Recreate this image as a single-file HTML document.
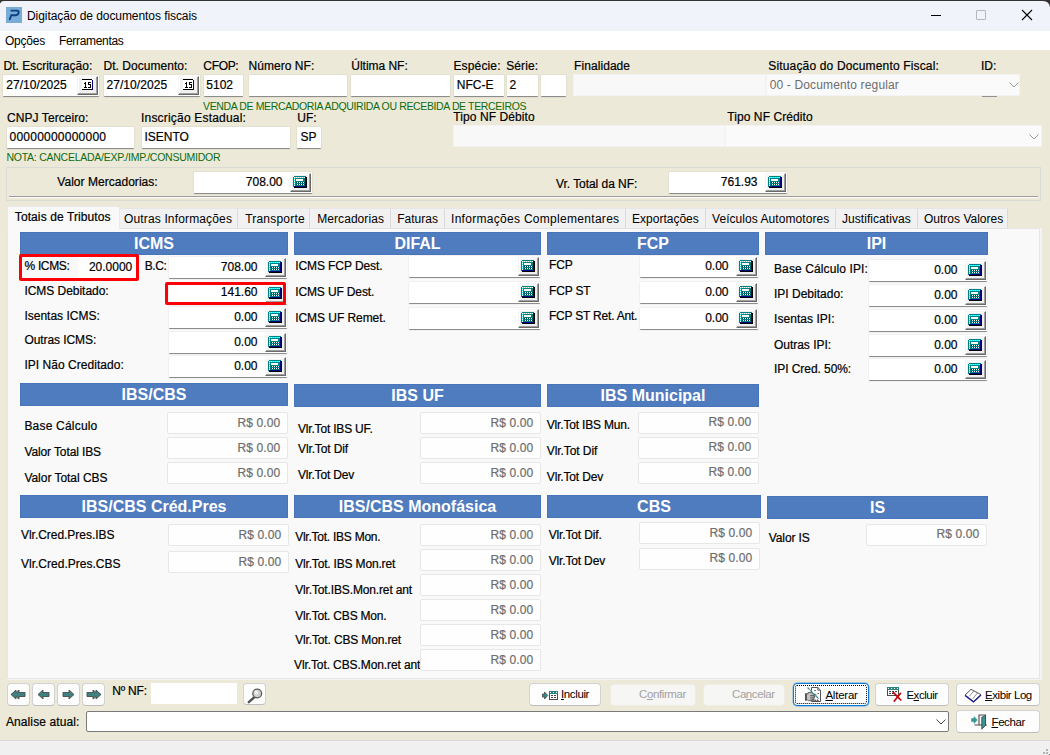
<!DOCTYPE html><html><head><meta charset="utf-8"><title>Digitação de documentos fiscais</title><style>
*{box-sizing:border-box;margin:0;padding:0}
html,body{width:1050px;height:755px;overflow:hidden;background:#ece9d8}
body{font-family:"Liberation Sans",sans-serif;font-size:12px;color:#000;position:relative}
.a{position:absolute;white-space:nowrap}
.l{position:absolute;white-space:nowrap;font-size:12px;line-height:14px;height:14px;-webkit-text-stroke:0.2px currentColor}
.g{position:absolute;white-space:nowrap;font-size:11px;line-height:13px;color:#0f6b0f}
.i{position:absolute;background:#fff;border-bottom:1px solid #8c8c8c;border-radius:1px;box-shadow:0 0 0 1px rgba(0,0,0,0.035)}
.d{position:absolute;background:#fefefe;border:1px solid #e7e7e7;border-radius:2px}
.dis{position:absolute;background:#f8f8f8;border:1px solid #f3f3f3}
.h{position:absolute;background:#4f7bbf;box-shadow:inset 0 0 0 1px #4875ba;color:#fff;font-weight:bold;font-size:16px;text-align:center;white-space:nowrap}
.b3{position:absolute;background:#f0f0f0;border:1px solid;border-color:#f4f4f4 #696969 #696969 #f4f4f4;box-shadow:inset -1px -1px 0 #a0a0a0,inset 1px 1px 0 #fff}
.tab{position:absolute;top:208px;height:21px;background:#f1f1f1;border-right:1px solid #dadada;border-top:1px solid #e6e6e6;border-bottom:1px solid #e2e2e2}
.btn{position:absolute;background:#fdfdfd;border:1px solid #d2d2d2;border-bottom-color:#bdbdbd;border-radius:4px}
u{text-decoration:underline}
svg{position:absolute;overflow:visible}
</style></head><body>
<div class="a" style="left:0;top:0;width:1050px;height:31px;background:#f0f3f9"></div>
<div class="a" style="left:0;top:0;width:1050px;height:1px;background:#333"></div>
<svg style="left:0;top:0" width="6" height="6"><path d="M0 0H6V1H4Q1 1 0 3.4Z" fill="#333"/></svg>
<svg style="left:1041px;top:0" width="9" height="9"><path d="M9 0H0V1H2Q8 1 9 7.2Z" fill="#333"/></svg>
<svg style="left:6px;top:7px" width="16" height="16" viewBox="0 0 16 16"><rect width="16" height="16" fill="#79abd7"/><path d="M5.3 3.6H10.8Q13 3.6 12.6 5.6Q12.2 8 9.8 8.2H5.2L3.8 12.2" stroke="#0a3f82" stroke-width="1.9" fill="none" stroke-linecap="round" stroke-linejoin="round"/></svg>
<div class="l" style="left:27px;top:9px;letter-spacing:-0.067px;-webkit-text-stroke:0;">Digitação de documentos fiscais</div>
<div class="a" style="left:931px;top:15px;width:10px;height:1px;background:#000"></div>
<div class="a" style="left:976px;top:10px;width:10px;height:10px;border:1px solid #b4b8bd;border-radius:1px"></div>
<svg style="left:1022px;top:10px" width="10" height="10" viewBox="0 0 10 10"><path d="M0 0L10 10M10 0L0 10" stroke="#000" stroke-width="1.1" fill="none"/></svg>
<div class="a" style="left:0;top:31px;width:1050px;height:19px;background:#fff"></div>
<div class="l" style="left:5px;top:34px;letter-spacing:-0.224px;-webkit-text-stroke:0;">Opções</div>
<div class="l" style="left:59px;top:34px;letter-spacing:-0.320px;-webkit-text-stroke:0;">Ferramentas</div>
<div class="l" style="left:3.5px;top:59px;letter-spacing:0.002px;">Dt. Escrituração:</div>
<div class="l" style="left:103.5px;top:59px;letter-spacing:0.040px;">Dt. Documento:</div>
<div class="l" style="left:203.3px;top:59px;letter-spacing:-0.331px;">CFOP:</div>
<div class="l" style="left:248.6px;top:59px;letter-spacing:0.036px;">Número NF:</div>
<div class="l" style="left:351.3px;top:59px;letter-spacing:-0.027px;">Última NF:</div>
<div class="l" style="left:453.4px;top:59px;letter-spacing:0.161px;">Espécie:</div>
<div class="l" style="left:506.2px;top:59px;letter-spacing:0.109px;">Série:</div>
<div class="l" style="left:574.1px;top:59px;letter-spacing:0.062px;">Finalidade</div>
<div class="l" style="left:768.3px;top:59px;letter-spacing:0.160px;">Situação do Documento Fiscal:</div>
<div class="l" style="left:981px;top:59px;">ID:</div>
<div class="i" style="left:3px;top:75px;width:96px;height:22px;"></div>
<div class="b3" style="left:77px;top:76px;width:21px;height:19px"><svg width="11" height="11" viewBox="0 0 11 11" style="left:4px;top:2px" shape-rendering="crispEdges"><rect x="0" y="0" width="11" height="11" fill="#fff"/><rect x="0" y="0" width="10" height="1" fill="#000"/><rect x="0" y="10" width="11" height="1" fill="#000"/><rect x="10" y="1" width="1" height="10" fill="#000080"/><g fill="#000"><rect x="2" y="4" width="1" height="1"/><rect x="3" y="3" width="1" height="6"/><rect x="2" y="8" width="3" height="1"/><rect x="6" y="3" width="3" height="1"/><rect x="6" y="4" width="1" height="2"/><rect x="6" y="5" width="3" height="1"/><rect x="8" y="6" width="1" height="2"/><rect x="6" y="8" width="3" height="1"/></g></svg></div>
<div class="l" style="left:6.2px;top:78px;letter-spacing:0.057px;">27/10/2025</div>
<div class="i" style="left:104px;top:75px;width:96px;height:22px;"></div>
<div class="b3" style="left:178px;top:76px;width:21px;height:19px"><svg width="11" height="11" viewBox="0 0 11 11" style="left:4px;top:2px" shape-rendering="crispEdges"><rect x="0" y="0" width="11" height="11" fill="#fff"/><rect x="0" y="0" width="10" height="1" fill="#000"/><rect x="0" y="10" width="11" height="1" fill="#000"/><rect x="10" y="1" width="1" height="10" fill="#000080"/><g fill="#000"><rect x="2" y="4" width="1" height="1"/><rect x="3" y="3" width="1" height="6"/><rect x="2" y="8" width="3" height="1"/><rect x="6" y="3" width="3" height="1"/><rect x="6" y="4" width="1" height="2"/><rect x="6" y="5" width="3" height="1"/><rect x="8" y="6" width="1" height="2"/><rect x="6" y="8" width="3" height="1"/></g></svg></div>
<div class="l" style="left:106.5px;top:78px;letter-spacing:0.057px;">27/10/2025</div>
<div class="i" style="left:204px;top:75px;width:39px;height:22px;"></div>
<div class="l" style="left:206.3px;top:78px;">5102</div>
<div class="i" style="left:249px;top:75px;width:98px;height:22px;"></div>
<div class="i" style="left:351px;top:75px;width:99px;height:22px;"></div>
<div class="i" style="left:454px;top:75px;width:50px;height:22px;"></div>
<div class="l" style="left:456.8px;top:78px;letter-spacing:-0.014px;">NFC-E</div>
<div class="i" style="left:507px;top:75px;width:31px;height:22px;"></div>
<div class="l" style="left:509.5px;top:78px;">2</div>
<div class="i" style="left:541px;top:75px;width:25px;height:22px;"></div>
<div class="dis" style="left:573px;top:74px;width:193px;height:22px;background:#f8f8f8"></div>
<div class="dis" style="left:766px;top:74px;width:254px;height:22px;background:#fafafa"><svg style="left:242px;top:7px" width="10" height="6" viewBox="0 0 10 6"><path d="M0.5 0.5L5 5L9.5 0.5" stroke="#9a9a9a" fill="none"/></svg></div>
<div class="l" style="left:769.7px;top:78px;letter-spacing:0.148px;color:#6d6d6d;-webkit-text-stroke:0;">00 - Documento regular</div>
<div class="a" style="left:982px;top:96px;width:15px;height:1px;background:#8f8f8f"></div>
<div class="g" style="left:203px;top:99.8px;letter-spacing:-0.367px;font-size:10.5px;line-height:12.5px;height:12.5px;">VENDA DE MERCADORIA ADQUIRIDA OU RECEBIDA DE TERCEIROS</div>
<div class="l" style="left:7.1px;top:111px;letter-spacing:0.059px;">CNPJ Terceiro:</div>
<div class="l" style="left:141px;top:111px;letter-spacing:0.192px;">Inscrição Estadual:</div>
<div class="l" style="left:297.3px;top:111px;">UF:</div>
<div class="l" style="left:453.2px;top:110px;letter-spacing:0.096px;">Tipo NF Débito</div>
<div class="l" style="left:727.2px;top:110px;letter-spacing:0.090px;">Tipo NF Crédito</div>
<div class="i" style="left:7px;top:127px;width:127px;height:22px;"></div>
<div class="l" style="left:9.5px;top:130px;letter-spacing:0.235px;">00000000000000</div>
<div class="i" style="left:142px;top:127px;width:148px;height:22px;"></div>
<div class="l" style="left:144.5px;top:130px;">ISENTO</div>
<div class="i" style="left:297px;top:127px;width:24px;height:22px;"></div>
<div class="l" style="left:300.5px;top:130px;">SP</div>
<div class="dis" style="left:453px;top:125px;width:272px;height:22px"></div>
<div class="dis" style="left:725px;top:125px;width:317px;height:22px;background:#fafafa"><svg style="left:303px;top:8px" width="10" height="6" viewBox="0 0 10 6"><path d="M0.5 0.5L5 5L9.5 0.5" stroke="#9a9a9a" fill="none"/></svg></div>
<div class="g" style="left:6.5px;top:151.2px;letter-spacing:-0.254px;font-size:10.5px;line-height:12.5px;height:12.5px;">NOTA: CANCELADA/EXP./IMP./CONSUMIDOR</div>
<div class="a" style="left:6px;top:167px;width:1035px;height:34px;border:1px solid #dbdbd6"></div>
<div class="a" style="left:9px;top:196px;width:1029px;height:1px;background:#9c9c9c"></div>
<div class="a" style="left:9px;top:197px;width:1029px;height:1px;background:#fff"></div>
<div class="l" style="left:57.3px;top:175px;letter-spacing:0.033px;">Valor Mercadorias:</div>
<div class="i" style="left:194px;top:172px;width:118px;height:22px;"></div>
<div class="b3" style="left:290px;top:173px;width:21px;height:19px"><svg width="14" height="12" viewBox="0 0 14 12" style="left:2px;top:2px" shape-rendering="crispEdges"><rect x="0" y="0" width="14" height="12" fill="#008080"/><rect x="12" y="1" width="1" height="10" fill="#000080"/><rect x="1" y="10" width="12" height="1" fill="#000080"/><rect x="13" y="1" width="1" height="11" fill="#000"/><rect x="1" y="11" width="13" height="1" fill="#000"/><rect x="1" y="1" width="1" height="1" fill="#fff"/><rect x="3" y="1" width="1" height="1" fill="#fff"/><rect x="5" y="1" width="1" height="1" fill="#fff"/><rect x="7" y="1" width="1" height="1" fill="#fff"/><rect x="9" y="1" width="1" height="1" fill="#fff"/><rect x="11" y="1" width="1" height="1" fill="#fff"/><rect x="2" y="1" width="1" height="1" fill="#0ff"/><rect x="4" y="1" width="1" height="1" fill="#0ff"/><rect x="6" y="1" width="1" height="1" fill="#0ff"/><rect x="8" y="1" width="1" height="1" fill="#0ff"/><rect x="10" y="1" width="1" height="1" fill="#0ff"/><rect x="1" y="3" width="1" height="1" fill="#fff"/><rect x="1" y="5" width="1" height="1" fill="#fff"/><rect x="1" y="7" width="1" height="1" fill="#fff"/><rect x="1" y="9" width="1" height="1" fill="#fff"/><rect x="1" y="2" width="1" height="1" fill="#0ff"/><rect x="1" y="4" width="1" height="1" fill="#0ff"/><rect x="1" y="6" width="1" height="1" fill="#0ff"/><rect x="1" y="8" width="1" height="1" fill="#0ff"/><rect x="3" y="3" width="7" height="2" fill="#fff"/><rect x="3" y="6" width="9" height="1" fill="#003c4c"/><rect x="4" y="6" width="1" height="1" fill="#fff"/><rect x="6" y="6" width="1" height="1" fill="#fff"/><rect x="8" y="6" width="1" height="1" fill="#fff"/><rect x="10" y="6" width="1" height="1" fill="#fff"/><rect x="3" y="8" width="9" height="1" fill="#003c4c"/><rect x="4" y="8" width="1" height="1" fill="#fff"/><rect x="6" y="8" width="1" height="1" fill="#fff"/><rect x="8" y="8" width="1" height="1" fill="#fff"/><rect x="10" y="8" width="1" height="1" fill="#fff"/><rect x="0" y="0" width="1" height="1" fill="#f0f0f0"/><rect x="13" y="0" width="1" height="1" fill="#f0f0f0"/><rect x="0" y="11" width="1" height="1" fill="#f0f0f0"/></svg></div>
<div class="l" style="left:245.8px;top:175px;letter-spacing:0.000px;">708.00</div>
<div class="l" style="left:556px;top:177px;letter-spacing:-0.051px;">Vr. Total da NF:</div>
<div class="i" style="left:669px;top:172px;width:118px;height:22px;"></div>
<div class="b3" style="left:765px;top:173px;width:21px;height:19px"><svg width="14" height="12" viewBox="0 0 14 12" style="left:2px;top:2px" shape-rendering="crispEdges"><rect x="0" y="0" width="14" height="12" fill="#008080"/><rect x="12" y="1" width="1" height="10" fill="#000080"/><rect x="1" y="10" width="12" height="1" fill="#000080"/><rect x="13" y="1" width="1" height="11" fill="#000"/><rect x="1" y="11" width="13" height="1" fill="#000"/><rect x="1" y="1" width="1" height="1" fill="#fff"/><rect x="3" y="1" width="1" height="1" fill="#fff"/><rect x="5" y="1" width="1" height="1" fill="#fff"/><rect x="7" y="1" width="1" height="1" fill="#fff"/><rect x="9" y="1" width="1" height="1" fill="#fff"/><rect x="11" y="1" width="1" height="1" fill="#fff"/><rect x="2" y="1" width="1" height="1" fill="#0ff"/><rect x="4" y="1" width="1" height="1" fill="#0ff"/><rect x="6" y="1" width="1" height="1" fill="#0ff"/><rect x="8" y="1" width="1" height="1" fill="#0ff"/><rect x="10" y="1" width="1" height="1" fill="#0ff"/><rect x="1" y="3" width="1" height="1" fill="#fff"/><rect x="1" y="5" width="1" height="1" fill="#fff"/><rect x="1" y="7" width="1" height="1" fill="#fff"/><rect x="1" y="9" width="1" height="1" fill="#fff"/><rect x="1" y="2" width="1" height="1" fill="#0ff"/><rect x="1" y="4" width="1" height="1" fill="#0ff"/><rect x="1" y="6" width="1" height="1" fill="#0ff"/><rect x="1" y="8" width="1" height="1" fill="#0ff"/><rect x="3" y="3" width="7" height="2" fill="#fff"/><rect x="3" y="6" width="9" height="1" fill="#003c4c"/><rect x="4" y="6" width="1" height="1" fill="#fff"/><rect x="6" y="6" width="1" height="1" fill="#fff"/><rect x="8" y="6" width="1" height="1" fill="#fff"/><rect x="10" y="6" width="1" height="1" fill="#fff"/><rect x="3" y="8" width="9" height="1" fill="#003c4c"/><rect x="4" y="8" width="1" height="1" fill="#fff"/><rect x="6" y="8" width="1" height="1" fill="#fff"/><rect x="8" y="8" width="1" height="1" fill="#fff"/><rect x="10" y="8" width="1" height="1" fill="#fff"/><rect x="0" y="0" width="1" height="1" fill="#f0f0f0"/><rect x="13" y="0" width="1" height="1" fill="#f0f0f0"/><rect x="0" y="11" width="1" height="1" fill="#f0f0f0"/></svg></div>
<div class="l" style="left:720.8px;top:175px;letter-spacing:0.000px;">761.93</div>
<div class="a" style="left:7px;top:228px;width:1035px;height:452px;background:#f3f3f3"></div>
<div class="a" style="left:7px;top:228px;width:1033px;height:451px;background:#f9f9f9;border:1px solid #e6e6e6"></div>
<div class="tab" style="left:119px;width:119px"></div>
<div class="l" style="left:124px;top:212px;letter-spacing:0.148px;-webkit-text-stroke:0;">Outras Informações</div>
<div class="tab" style="left:238px;width:72px"></div>
<div class="l" style="left:245.2px;top:212px;letter-spacing:0.202px;-webkit-text-stroke:0;">Transporte</div>
<div class="tab" style="left:310px;width:81px"></div>
<div class="l" style="left:317.2px;top:212px;letter-spacing:0.070px;-webkit-text-stroke:0;">Mercadorias</div>
<div class="tab" style="left:391px;width:54px"></div>
<div class="l" style="left:397.2px;top:212px;letter-spacing:0.018px;-webkit-text-stroke:0;">Faturas</div>
<div class="tab" style="left:445px;width:181px"></div>
<div class="l" style="left:451px;top:212px;letter-spacing:0.295px;-webkit-text-stroke:0;">Informações Complementares</div>
<div class="tab" style="left:626px;width:80px"></div>
<div class="l" style="left:632px;top:212px;letter-spacing:0.010px;-webkit-text-stroke:0;">Exportações</div>
<div class="tab" style="left:706px;width:130px"></div>
<div class="l" style="left:712px;top:212px;letter-spacing:0.058px;-webkit-text-stroke:0;">Veículos Automotores</div>
<div class="tab" style="left:836px;width:82px"></div>
<div class="l" style="left:842px;top:212px;letter-spacing:0.056px;-webkit-text-stroke:0;">Justificativas</div>
<div class="tab" style="left:918px;width:90px"></div>
<div class="l" style="left:924px;top:212px;letter-spacing:0.005px;-webkit-text-stroke:0;">Outros Valores</div>
<div class="a" style="left:7px;top:206px;width:113px;height:23px;background:#f9f9f9;border:1px solid #e9e9e9;border-bottom:0"></div>
<div class="l" style="left:14.8px;top:210px;letter-spacing:0.098px;">Totais de Tributos</div>
<div class="h" style="left:20px;top:232px;width:268px;height:23px;line-height:23px">ICMS</div>
<div class="h" style="left:294px;top:232px;width:247px;height:23px;line-height:23px">DIFAL</div>
<div class="h" style="left:547px;top:232px;width:212px;height:23px;line-height:23px">FCP</div>
<div class="h" style="left:765px;top:232px;width:223px;height:23px;line-height:23px">IPI</div>
<div class="h" style="left:20px;top:383px;width:268px;height:23px;line-height:23px">IBS/CBS</div>
<div class="h" style="left:294px;top:384px;width:247px;height:23px;line-height:23px">IBS UF</div>
<div class="h" style="left:547px;top:384px;width:212px;height:23px;line-height:23px">IBS Municipal</div>
<div class="h" style="left:20px;top:495px;width:268px;height:23px;line-height:23px">IBS/CBS Créd.Pres</div>
<div class="h" style="left:294px;top:495px;width:247px;height:23px;line-height:23px">IBS/CBS Monofásica</div>
<div class="h" style="left:547px;top:495px;width:214px;height:23px;line-height:23px">CBS</div>
<div class="h" style="left:767px;top:496px;width:221px;height:23px;line-height:23px">IS</div>
<div class="l" style="left:24.6px;top:259px;letter-spacing:-0.361px;">% ICMS:</div>
<div class="a" style="left:78px;top:257px;width:58px;height:21px;background:#fff"></div>
<div class="l" style="left:88.9px;top:260px;letter-spacing:0.000px;">20.0000</div>
<div class="l" style="left:144.8px;top:259px;letter-spacing:-0.457px;">B.C:</div>
<div class="i" style="left:169px;top:257px;width:118px;height:22px;"></div>
<div class="b3" style="left:265px;top:258px;width:21px;height:19px"><svg width="14" height="12" viewBox="0 0 14 12" style="left:2px;top:2px" shape-rendering="crispEdges"><rect x="0" y="0" width="14" height="12" fill="#008080"/><rect x="12" y="1" width="1" height="10" fill="#000080"/><rect x="1" y="10" width="12" height="1" fill="#000080"/><rect x="13" y="1" width="1" height="11" fill="#000"/><rect x="1" y="11" width="13" height="1" fill="#000"/><rect x="1" y="1" width="1" height="1" fill="#fff"/><rect x="3" y="1" width="1" height="1" fill="#fff"/><rect x="5" y="1" width="1" height="1" fill="#fff"/><rect x="7" y="1" width="1" height="1" fill="#fff"/><rect x="9" y="1" width="1" height="1" fill="#fff"/><rect x="11" y="1" width="1" height="1" fill="#fff"/><rect x="2" y="1" width="1" height="1" fill="#0ff"/><rect x="4" y="1" width="1" height="1" fill="#0ff"/><rect x="6" y="1" width="1" height="1" fill="#0ff"/><rect x="8" y="1" width="1" height="1" fill="#0ff"/><rect x="10" y="1" width="1" height="1" fill="#0ff"/><rect x="1" y="3" width="1" height="1" fill="#fff"/><rect x="1" y="5" width="1" height="1" fill="#fff"/><rect x="1" y="7" width="1" height="1" fill="#fff"/><rect x="1" y="9" width="1" height="1" fill="#fff"/><rect x="1" y="2" width="1" height="1" fill="#0ff"/><rect x="1" y="4" width="1" height="1" fill="#0ff"/><rect x="1" y="6" width="1" height="1" fill="#0ff"/><rect x="1" y="8" width="1" height="1" fill="#0ff"/><rect x="3" y="3" width="7" height="2" fill="#fff"/><rect x="3" y="6" width="9" height="1" fill="#003c4c"/><rect x="4" y="6" width="1" height="1" fill="#fff"/><rect x="6" y="6" width="1" height="1" fill="#fff"/><rect x="8" y="6" width="1" height="1" fill="#fff"/><rect x="10" y="6" width="1" height="1" fill="#fff"/><rect x="3" y="8" width="9" height="1" fill="#003c4c"/><rect x="4" y="8" width="1" height="1" fill="#fff"/><rect x="6" y="8" width="1" height="1" fill="#fff"/><rect x="8" y="8" width="1" height="1" fill="#fff"/><rect x="10" y="8" width="1" height="1" fill="#fff"/><rect x="0" y="0" width="1" height="1" fill="#f0f0f0"/><rect x="13" y="0" width="1" height="1" fill="#f0f0f0"/><rect x="0" y="11" width="1" height="1" fill="#f0f0f0"/></svg></div>
<div class="l" style="left:220.8px;top:260px;letter-spacing:0.000px;">708.00</div>
<div class="l" style="left:24.4px;top:284px;letter-spacing:-0.035px;">ICMS Debitado:</div>
<div class="i" style="left:169px;top:283px;width:118px;height:22px;"></div>
<div class="b3" style="left:265px;top:284px;width:21px;height:19px"><svg width="14" height="12" viewBox="0 0 14 12" style="left:2px;top:2px" shape-rendering="crispEdges"><rect x="0" y="0" width="14" height="12" fill="#008080"/><rect x="12" y="1" width="1" height="10" fill="#000080"/><rect x="1" y="10" width="12" height="1" fill="#000080"/><rect x="13" y="1" width="1" height="11" fill="#000"/><rect x="1" y="11" width="13" height="1" fill="#000"/><rect x="1" y="1" width="1" height="1" fill="#fff"/><rect x="3" y="1" width="1" height="1" fill="#fff"/><rect x="5" y="1" width="1" height="1" fill="#fff"/><rect x="7" y="1" width="1" height="1" fill="#fff"/><rect x="9" y="1" width="1" height="1" fill="#fff"/><rect x="11" y="1" width="1" height="1" fill="#fff"/><rect x="2" y="1" width="1" height="1" fill="#0ff"/><rect x="4" y="1" width="1" height="1" fill="#0ff"/><rect x="6" y="1" width="1" height="1" fill="#0ff"/><rect x="8" y="1" width="1" height="1" fill="#0ff"/><rect x="10" y="1" width="1" height="1" fill="#0ff"/><rect x="1" y="3" width="1" height="1" fill="#fff"/><rect x="1" y="5" width="1" height="1" fill="#fff"/><rect x="1" y="7" width="1" height="1" fill="#fff"/><rect x="1" y="9" width="1" height="1" fill="#fff"/><rect x="1" y="2" width="1" height="1" fill="#0ff"/><rect x="1" y="4" width="1" height="1" fill="#0ff"/><rect x="1" y="6" width="1" height="1" fill="#0ff"/><rect x="1" y="8" width="1" height="1" fill="#0ff"/><rect x="3" y="3" width="7" height="2" fill="#fff"/><rect x="3" y="6" width="9" height="1" fill="#003c4c"/><rect x="4" y="6" width="1" height="1" fill="#fff"/><rect x="6" y="6" width="1" height="1" fill="#fff"/><rect x="8" y="6" width="1" height="1" fill="#fff"/><rect x="10" y="6" width="1" height="1" fill="#fff"/><rect x="3" y="8" width="9" height="1" fill="#003c4c"/><rect x="4" y="8" width="1" height="1" fill="#fff"/><rect x="6" y="8" width="1" height="1" fill="#fff"/><rect x="8" y="8" width="1" height="1" fill="#fff"/><rect x="10" y="8" width="1" height="1" fill="#fff"/><rect x="0" y="0" width="1" height="1" fill="#f0f0f0"/><rect x="13" y="0" width="1" height="1" fill="#f0f0f0"/><rect x="0" y="11" width="1" height="1" fill="#f0f0f0"/></svg></div>
<div class="l" style="left:220.8px;top:285px;letter-spacing:0.000px;">141.60</div>
<div class="l" style="left:24.4px;top:309px;letter-spacing:0.006px;">Isentas ICMS:</div>
<div class="i" style="left:169px;top:307px;width:118px;height:22px;"></div>
<div class="b3" style="left:265px;top:308px;width:21px;height:19px"><svg width="14" height="12" viewBox="0 0 14 12" style="left:2px;top:2px" shape-rendering="crispEdges"><rect x="0" y="0" width="14" height="12" fill="#008080"/><rect x="12" y="1" width="1" height="10" fill="#000080"/><rect x="1" y="10" width="12" height="1" fill="#000080"/><rect x="13" y="1" width="1" height="11" fill="#000"/><rect x="1" y="11" width="13" height="1" fill="#000"/><rect x="1" y="1" width="1" height="1" fill="#fff"/><rect x="3" y="1" width="1" height="1" fill="#fff"/><rect x="5" y="1" width="1" height="1" fill="#fff"/><rect x="7" y="1" width="1" height="1" fill="#fff"/><rect x="9" y="1" width="1" height="1" fill="#fff"/><rect x="11" y="1" width="1" height="1" fill="#fff"/><rect x="2" y="1" width="1" height="1" fill="#0ff"/><rect x="4" y="1" width="1" height="1" fill="#0ff"/><rect x="6" y="1" width="1" height="1" fill="#0ff"/><rect x="8" y="1" width="1" height="1" fill="#0ff"/><rect x="10" y="1" width="1" height="1" fill="#0ff"/><rect x="1" y="3" width="1" height="1" fill="#fff"/><rect x="1" y="5" width="1" height="1" fill="#fff"/><rect x="1" y="7" width="1" height="1" fill="#fff"/><rect x="1" y="9" width="1" height="1" fill="#fff"/><rect x="1" y="2" width="1" height="1" fill="#0ff"/><rect x="1" y="4" width="1" height="1" fill="#0ff"/><rect x="1" y="6" width="1" height="1" fill="#0ff"/><rect x="1" y="8" width="1" height="1" fill="#0ff"/><rect x="3" y="3" width="7" height="2" fill="#fff"/><rect x="3" y="6" width="9" height="1" fill="#003c4c"/><rect x="4" y="6" width="1" height="1" fill="#fff"/><rect x="6" y="6" width="1" height="1" fill="#fff"/><rect x="8" y="6" width="1" height="1" fill="#fff"/><rect x="10" y="6" width="1" height="1" fill="#fff"/><rect x="3" y="8" width="9" height="1" fill="#003c4c"/><rect x="4" y="8" width="1" height="1" fill="#fff"/><rect x="6" y="8" width="1" height="1" fill="#fff"/><rect x="8" y="8" width="1" height="1" fill="#fff"/><rect x="10" y="8" width="1" height="1" fill="#fff"/><rect x="0" y="0" width="1" height="1" fill="#f0f0f0"/><rect x="13" y="0" width="1" height="1" fill="#f0f0f0"/><rect x="0" y="11" width="1" height="1" fill="#f0f0f0"/></svg></div>
<div class="l" style="left:234.2px;top:310px;letter-spacing:0.000px;">0.00</div>
<div class="l" style="left:24.4px;top:333px;letter-spacing:-0.071px;">Outras ICMS:</div>
<div class="i" style="left:169px;top:332px;width:118px;height:22px;"></div>
<div class="b3" style="left:265px;top:333px;width:21px;height:19px"><svg width="14" height="12" viewBox="0 0 14 12" style="left:2px;top:2px" shape-rendering="crispEdges"><rect x="0" y="0" width="14" height="12" fill="#008080"/><rect x="12" y="1" width="1" height="10" fill="#000080"/><rect x="1" y="10" width="12" height="1" fill="#000080"/><rect x="13" y="1" width="1" height="11" fill="#000"/><rect x="1" y="11" width="13" height="1" fill="#000"/><rect x="1" y="1" width="1" height="1" fill="#fff"/><rect x="3" y="1" width="1" height="1" fill="#fff"/><rect x="5" y="1" width="1" height="1" fill="#fff"/><rect x="7" y="1" width="1" height="1" fill="#fff"/><rect x="9" y="1" width="1" height="1" fill="#fff"/><rect x="11" y="1" width="1" height="1" fill="#fff"/><rect x="2" y="1" width="1" height="1" fill="#0ff"/><rect x="4" y="1" width="1" height="1" fill="#0ff"/><rect x="6" y="1" width="1" height="1" fill="#0ff"/><rect x="8" y="1" width="1" height="1" fill="#0ff"/><rect x="10" y="1" width="1" height="1" fill="#0ff"/><rect x="1" y="3" width="1" height="1" fill="#fff"/><rect x="1" y="5" width="1" height="1" fill="#fff"/><rect x="1" y="7" width="1" height="1" fill="#fff"/><rect x="1" y="9" width="1" height="1" fill="#fff"/><rect x="1" y="2" width="1" height="1" fill="#0ff"/><rect x="1" y="4" width="1" height="1" fill="#0ff"/><rect x="1" y="6" width="1" height="1" fill="#0ff"/><rect x="1" y="8" width="1" height="1" fill="#0ff"/><rect x="3" y="3" width="7" height="2" fill="#fff"/><rect x="3" y="6" width="9" height="1" fill="#003c4c"/><rect x="4" y="6" width="1" height="1" fill="#fff"/><rect x="6" y="6" width="1" height="1" fill="#fff"/><rect x="8" y="6" width="1" height="1" fill="#fff"/><rect x="10" y="6" width="1" height="1" fill="#fff"/><rect x="3" y="8" width="9" height="1" fill="#003c4c"/><rect x="4" y="8" width="1" height="1" fill="#fff"/><rect x="6" y="8" width="1" height="1" fill="#fff"/><rect x="8" y="8" width="1" height="1" fill="#fff"/><rect x="10" y="8" width="1" height="1" fill="#fff"/><rect x="0" y="0" width="1" height="1" fill="#f0f0f0"/><rect x="13" y="0" width="1" height="1" fill="#f0f0f0"/><rect x="0" y="11" width="1" height="1" fill="#f0f0f0"/></svg></div>
<div class="l" style="left:234.2px;top:335px;letter-spacing:0.000px;">0.00</div>
<div class="l" style="left:24.4px;top:358px;letter-spacing:0.040px;">IPI Não Creditado:</div>
<div class="i" style="left:169px;top:356px;width:118px;height:22px;"></div>
<div class="b3" style="left:265px;top:357px;width:21px;height:19px"><svg width="14" height="12" viewBox="0 0 14 12" style="left:2px;top:2px" shape-rendering="crispEdges"><rect x="0" y="0" width="14" height="12" fill="#008080"/><rect x="12" y="1" width="1" height="10" fill="#000080"/><rect x="1" y="10" width="12" height="1" fill="#000080"/><rect x="13" y="1" width="1" height="11" fill="#000"/><rect x="1" y="11" width="13" height="1" fill="#000"/><rect x="1" y="1" width="1" height="1" fill="#fff"/><rect x="3" y="1" width="1" height="1" fill="#fff"/><rect x="5" y="1" width="1" height="1" fill="#fff"/><rect x="7" y="1" width="1" height="1" fill="#fff"/><rect x="9" y="1" width="1" height="1" fill="#fff"/><rect x="11" y="1" width="1" height="1" fill="#fff"/><rect x="2" y="1" width="1" height="1" fill="#0ff"/><rect x="4" y="1" width="1" height="1" fill="#0ff"/><rect x="6" y="1" width="1" height="1" fill="#0ff"/><rect x="8" y="1" width="1" height="1" fill="#0ff"/><rect x="10" y="1" width="1" height="1" fill="#0ff"/><rect x="1" y="3" width="1" height="1" fill="#fff"/><rect x="1" y="5" width="1" height="1" fill="#fff"/><rect x="1" y="7" width="1" height="1" fill="#fff"/><rect x="1" y="9" width="1" height="1" fill="#fff"/><rect x="1" y="2" width="1" height="1" fill="#0ff"/><rect x="1" y="4" width="1" height="1" fill="#0ff"/><rect x="1" y="6" width="1" height="1" fill="#0ff"/><rect x="1" y="8" width="1" height="1" fill="#0ff"/><rect x="3" y="3" width="7" height="2" fill="#fff"/><rect x="3" y="6" width="9" height="1" fill="#003c4c"/><rect x="4" y="6" width="1" height="1" fill="#fff"/><rect x="6" y="6" width="1" height="1" fill="#fff"/><rect x="8" y="6" width="1" height="1" fill="#fff"/><rect x="10" y="6" width="1" height="1" fill="#fff"/><rect x="3" y="8" width="9" height="1" fill="#003c4c"/><rect x="4" y="8" width="1" height="1" fill="#fff"/><rect x="6" y="8" width="1" height="1" fill="#fff"/><rect x="8" y="8" width="1" height="1" fill="#fff"/><rect x="10" y="8" width="1" height="1" fill="#fff"/><rect x="0" y="0" width="1" height="1" fill="#f0f0f0"/><rect x="13" y="0" width="1" height="1" fill="#f0f0f0"/><rect x="0" y="11" width="1" height="1" fill="#f0f0f0"/></svg></div>
<div class="l" style="left:234.2px;top:359px;letter-spacing:0.000px;">0.00</div>
<div class="a" style="left:19px;top:254px;width:120px;height:27px;border:3px solid #fb0007;border-radius:2px"></div>
<div class="a" style="left:165px;top:282px;width:121px;height:23px;border:3px solid #fb0007;border-radius:2px"></div>
<div class="l" style="left:295.2px;top:259px;letter-spacing:-0.081px;">ICMS FCP Dest.</div>
<div class="i" style="left:409px;top:256px;width:131px;height:22px;"></div>
<div class="b3" style="left:518px;top:257px;width:21px;height:19px"><svg width="14" height="12" viewBox="0 0 14 12" style="left:2px;top:2px" shape-rendering="crispEdges"><rect x="0" y="0" width="14" height="12" fill="#008080"/><rect x="12" y="1" width="1" height="10" fill="#000080"/><rect x="1" y="10" width="12" height="1" fill="#000080"/><rect x="13" y="1" width="1" height="11" fill="#000"/><rect x="1" y="11" width="13" height="1" fill="#000"/><rect x="1" y="1" width="1" height="1" fill="#fff"/><rect x="3" y="1" width="1" height="1" fill="#fff"/><rect x="5" y="1" width="1" height="1" fill="#fff"/><rect x="7" y="1" width="1" height="1" fill="#fff"/><rect x="9" y="1" width="1" height="1" fill="#fff"/><rect x="11" y="1" width="1" height="1" fill="#fff"/><rect x="2" y="1" width="1" height="1" fill="#0ff"/><rect x="4" y="1" width="1" height="1" fill="#0ff"/><rect x="6" y="1" width="1" height="1" fill="#0ff"/><rect x="8" y="1" width="1" height="1" fill="#0ff"/><rect x="10" y="1" width="1" height="1" fill="#0ff"/><rect x="1" y="3" width="1" height="1" fill="#fff"/><rect x="1" y="5" width="1" height="1" fill="#fff"/><rect x="1" y="7" width="1" height="1" fill="#fff"/><rect x="1" y="9" width="1" height="1" fill="#fff"/><rect x="1" y="2" width="1" height="1" fill="#0ff"/><rect x="1" y="4" width="1" height="1" fill="#0ff"/><rect x="1" y="6" width="1" height="1" fill="#0ff"/><rect x="1" y="8" width="1" height="1" fill="#0ff"/><rect x="3" y="3" width="7" height="2" fill="#fff"/><rect x="3" y="6" width="9" height="1" fill="#003c4c"/><rect x="4" y="6" width="1" height="1" fill="#fff"/><rect x="6" y="6" width="1" height="1" fill="#fff"/><rect x="8" y="6" width="1" height="1" fill="#fff"/><rect x="10" y="6" width="1" height="1" fill="#fff"/><rect x="3" y="8" width="9" height="1" fill="#003c4c"/><rect x="4" y="8" width="1" height="1" fill="#fff"/><rect x="6" y="8" width="1" height="1" fill="#fff"/><rect x="8" y="8" width="1" height="1" fill="#fff"/><rect x="10" y="8" width="1" height="1" fill="#fff"/><rect x="0" y="0" width="1" height="1" fill="#f0f0f0"/><rect x="13" y="0" width="1" height="1" fill="#f0f0f0"/><rect x="0" y="11" width="1" height="1" fill="#f0f0f0"/></svg></div>
<div class="l" style="left:295.2px;top:285px;letter-spacing:-0.127px;">ICMS UF Dest.</div>
<div class="i" style="left:409px;top:282px;width:131px;height:22px;"></div>
<div class="b3" style="left:518px;top:283px;width:21px;height:19px"><svg width="14" height="12" viewBox="0 0 14 12" style="left:2px;top:2px" shape-rendering="crispEdges"><rect x="0" y="0" width="14" height="12" fill="#008080"/><rect x="12" y="1" width="1" height="10" fill="#000080"/><rect x="1" y="10" width="12" height="1" fill="#000080"/><rect x="13" y="1" width="1" height="11" fill="#000"/><rect x="1" y="11" width="13" height="1" fill="#000"/><rect x="1" y="1" width="1" height="1" fill="#fff"/><rect x="3" y="1" width="1" height="1" fill="#fff"/><rect x="5" y="1" width="1" height="1" fill="#fff"/><rect x="7" y="1" width="1" height="1" fill="#fff"/><rect x="9" y="1" width="1" height="1" fill="#fff"/><rect x="11" y="1" width="1" height="1" fill="#fff"/><rect x="2" y="1" width="1" height="1" fill="#0ff"/><rect x="4" y="1" width="1" height="1" fill="#0ff"/><rect x="6" y="1" width="1" height="1" fill="#0ff"/><rect x="8" y="1" width="1" height="1" fill="#0ff"/><rect x="10" y="1" width="1" height="1" fill="#0ff"/><rect x="1" y="3" width="1" height="1" fill="#fff"/><rect x="1" y="5" width="1" height="1" fill="#fff"/><rect x="1" y="7" width="1" height="1" fill="#fff"/><rect x="1" y="9" width="1" height="1" fill="#fff"/><rect x="1" y="2" width="1" height="1" fill="#0ff"/><rect x="1" y="4" width="1" height="1" fill="#0ff"/><rect x="1" y="6" width="1" height="1" fill="#0ff"/><rect x="1" y="8" width="1" height="1" fill="#0ff"/><rect x="3" y="3" width="7" height="2" fill="#fff"/><rect x="3" y="6" width="9" height="1" fill="#003c4c"/><rect x="4" y="6" width="1" height="1" fill="#fff"/><rect x="6" y="6" width="1" height="1" fill="#fff"/><rect x="8" y="6" width="1" height="1" fill="#fff"/><rect x="10" y="6" width="1" height="1" fill="#fff"/><rect x="3" y="8" width="9" height="1" fill="#003c4c"/><rect x="4" y="8" width="1" height="1" fill="#fff"/><rect x="6" y="8" width="1" height="1" fill="#fff"/><rect x="8" y="8" width="1" height="1" fill="#fff"/><rect x="10" y="8" width="1" height="1" fill="#fff"/><rect x="0" y="0" width="1" height="1" fill="#f0f0f0"/><rect x="13" y="0" width="1" height="1" fill="#f0f0f0"/><rect x="0" y="11" width="1" height="1" fill="#f0f0f0"/></svg></div>
<div class="l" style="left:295.2px;top:311px;letter-spacing:-0.052px;">ICMS UF Remet.</div>
<div class="i" style="left:409px;top:308px;width:131px;height:22px;"></div>
<div class="b3" style="left:518px;top:309px;width:21px;height:19px"><svg width="14" height="12" viewBox="0 0 14 12" style="left:2px;top:2px" shape-rendering="crispEdges"><rect x="0" y="0" width="14" height="12" fill="#008080"/><rect x="12" y="1" width="1" height="10" fill="#000080"/><rect x="1" y="10" width="12" height="1" fill="#000080"/><rect x="13" y="1" width="1" height="11" fill="#000"/><rect x="1" y="11" width="13" height="1" fill="#000"/><rect x="1" y="1" width="1" height="1" fill="#fff"/><rect x="3" y="1" width="1" height="1" fill="#fff"/><rect x="5" y="1" width="1" height="1" fill="#fff"/><rect x="7" y="1" width="1" height="1" fill="#fff"/><rect x="9" y="1" width="1" height="1" fill="#fff"/><rect x="11" y="1" width="1" height="1" fill="#fff"/><rect x="2" y="1" width="1" height="1" fill="#0ff"/><rect x="4" y="1" width="1" height="1" fill="#0ff"/><rect x="6" y="1" width="1" height="1" fill="#0ff"/><rect x="8" y="1" width="1" height="1" fill="#0ff"/><rect x="10" y="1" width="1" height="1" fill="#0ff"/><rect x="1" y="3" width="1" height="1" fill="#fff"/><rect x="1" y="5" width="1" height="1" fill="#fff"/><rect x="1" y="7" width="1" height="1" fill="#fff"/><rect x="1" y="9" width="1" height="1" fill="#fff"/><rect x="1" y="2" width="1" height="1" fill="#0ff"/><rect x="1" y="4" width="1" height="1" fill="#0ff"/><rect x="1" y="6" width="1" height="1" fill="#0ff"/><rect x="1" y="8" width="1" height="1" fill="#0ff"/><rect x="3" y="3" width="7" height="2" fill="#fff"/><rect x="3" y="6" width="9" height="1" fill="#003c4c"/><rect x="4" y="6" width="1" height="1" fill="#fff"/><rect x="6" y="6" width="1" height="1" fill="#fff"/><rect x="8" y="6" width="1" height="1" fill="#fff"/><rect x="10" y="6" width="1" height="1" fill="#fff"/><rect x="3" y="8" width="9" height="1" fill="#003c4c"/><rect x="4" y="8" width="1" height="1" fill="#fff"/><rect x="6" y="8" width="1" height="1" fill="#fff"/><rect x="8" y="8" width="1" height="1" fill="#fff"/><rect x="10" y="8" width="1" height="1" fill="#fff"/><rect x="0" y="0" width="1" height="1" fill="#f0f0f0"/><rect x="13" y="0" width="1" height="1" fill="#f0f0f0"/><rect x="0" y="11" width="1" height="1" fill="#f0f0f0"/></svg></div>
<div class="l" style="left:549px;top:258px;letter-spacing:-0.133px;">FCP</div>
<div class="i" style="left:640px;top:256px;width:118px;height:22px;"></div>
<div class="b3" style="left:736px;top:257px;width:21px;height:19px"><svg width="14" height="12" viewBox="0 0 14 12" style="left:2px;top:2px" shape-rendering="crispEdges"><rect x="0" y="0" width="14" height="12" fill="#008080"/><rect x="12" y="1" width="1" height="10" fill="#000080"/><rect x="1" y="10" width="12" height="1" fill="#000080"/><rect x="13" y="1" width="1" height="11" fill="#000"/><rect x="1" y="11" width="13" height="1" fill="#000"/><rect x="1" y="1" width="1" height="1" fill="#fff"/><rect x="3" y="1" width="1" height="1" fill="#fff"/><rect x="5" y="1" width="1" height="1" fill="#fff"/><rect x="7" y="1" width="1" height="1" fill="#fff"/><rect x="9" y="1" width="1" height="1" fill="#fff"/><rect x="11" y="1" width="1" height="1" fill="#fff"/><rect x="2" y="1" width="1" height="1" fill="#0ff"/><rect x="4" y="1" width="1" height="1" fill="#0ff"/><rect x="6" y="1" width="1" height="1" fill="#0ff"/><rect x="8" y="1" width="1" height="1" fill="#0ff"/><rect x="10" y="1" width="1" height="1" fill="#0ff"/><rect x="1" y="3" width="1" height="1" fill="#fff"/><rect x="1" y="5" width="1" height="1" fill="#fff"/><rect x="1" y="7" width="1" height="1" fill="#fff"/><rect x="1" y="9" width="1" height="1" fill="#fff"/><rect x="1" y="2" width="1" height="1" fill="#0ff"/><rect x="1" y="4" width="1" height="1" fill="#0ff"/><rect x="1" y="6" width="1" height="1" fill="#0ff"/><rect x="1" y="8" width="1" height="1" fill="#0ff"/><rect x="3" y="3" width="7" height="2" fill="#fff"/><rect x="3" y="6" width="9" height="1" fill="#003c4c"/><rect x="4" y="6" width="1" height="1" fill="#fff"/><rect x="6" y="6" width="1" height="1" fill="#fff"/><rect x="8" y="6" width="1" height="1" fill="#fff"/><rect x="10" y="6" width="1" height="1" fill="#fff"/><rect x="3" y="8" width="9" height="1" fill="#003c4c"/><rect x="4" y="8" width="1" height="1" fill="#fff"/><rect x="6" y="8" width="1" height="1" fill="#fff"/><rect x="8" y="8" width="1" height="1" fill="#fff"/><rect x="10" y="8" width="1" height="1" fill="#fff"/><rect x="0" y="0" width="1" height="1" fill="#f0f0f0"/><rect x="13" y="0" width="1" height="1" fill="#f0f0f0"/><rect x="0" y="11" width="1" height="1" fill="#f0f0f0"/></svg></div>
<div class="l" style="left:705.2px;top:259px;letter-spacing:0.000px;">0.00</div>
<div class="l" style="left:549px;top:284px;letter-spacing:-0.156px;">FCP ST</div>
<div class="i" style="left:640px;top:282px;width:118px;height:22px;"></div>
<div class="b3" style="left:736px;top:283px;width:21px;height:19px"><svg width="14" height="12" viewBox="0 0 14 12" style="left:2px;top:2px" shape-rendering="crispEdges"><rect x="0" y="0" width="14" height="12" fill="#008080"/><rect x="12" y="1" width="1" height="10" fill="#000080"/><rect x="1" y="10" width="12" height="1" fill="#000080"/><rect x="13" y="1" width="1" height="11" fill="#000"/><rect x="1" y="11" width="13" height="1" fill="#000"/><rect x="1" y="1" width="1" height="1" fill="#fff"/><rect x="3" y="1" width="1" height="1" fill="#fff"/><rect x="5" y="1" width="1" height="1" fill="#fff"/><rect x="7" y="1" width="1" height="1" fill="#fff"/><rect x="9" y="1" width="1" height="1" fill="#fff"/><rect x="11" y="1" width="1" height="1" fill="#fff"/><rect x="2" y="1" width="1" height="1" fill="#0ff"/><rect x="4" y="1" width="1" height="1" fill="#0ff"/><rect x="6" y="1" width="1" height="1" fill="#0ff"/><rect x="8" y="1" width="1" height="1" fill="#0ff"/><rect x="10" y="1" width="1" height="1" fill="#0ff"/><rect x="1" y="3" width="1" height="1" fill="#fff"/><rect x="1" y="5" width="1" height="1" fill="#fff"/><rect x="1" y="7" width="1" height="1" fill="#fff"/><rect x="1" y="9" width="1" height="1" fill="#fff"/><rect x="1" y="2" width="1" height="1" fill="#0ff"/><rect x="1" y="4" width="1" height="1" fill="#0ff"/><rect x="1" y="6" width="1" height="1" fill="#0ff"/><rect x="1" y="8" width="1" height="1" fill="#0ff"/><rect x="3" y="3" width="7" height="2" fill="#fff"/><rect x="3" y="6" width="9" height="1" fill="#003c4c"/><rect x="4" y="6" width="1" height="1" fill="#fff"/><rect x="6" y="6" width="1" height="1" fill="#fff"/><rect x="8" y="6" width="1" height="1" fill="#fff"/><rect x="10" y="6" width="1" height="1" fill="#fff"/><rect x="3" y="8" width="9" height="1" fill="#003c4c"/><rect x="4" y="8" width="1" height="1" fill="#fff"/><rect x="6" y="8" width="1" height="1" fill="#fff"/><rect x="8" y="8" width="1" height="1" fill="#fff"/><rect x="10" y="8" width="1" height="1" fill="#fff"/><rect x="0" y="0" width="1" height="1" fill="#f0f0f0"/><rect x="13" y="0" width="1" height="1" fill="#f0f0f0"/><rect x="0" y="11" width="1" height="1" fill="#f0f0f0"/></svg></div>
<div class="l" style="left:705.2px;top:285px;letter-spacing:0.000px;">0.00</div>
<div class="l" style="left:549px;top:309px;letter-spacing:-0.209px;">FCP ST Ret. Ant.</div>
<div class="i" style="left:640px;top:308px;width:118px;height:22px;"></div>
<div class="b3" style="left:736px;top:309px;width:21px;height:19px"><svg width="14" height="12" viewBox="0 0 14 12" style="left:2px;top:2px" shape-rendering="crispEdges"><rect x="0" y="0" width="14" height="12" fill="#008080"/><rect x="12" y="1" width="1" height="10" fill="#000080"/><rect x="1" y="10" width="12" height="1" fill="#000080"/><rect x="13" y="1" width="1" height="11" fill="#000"/><rect x="1" y="11" width="13" height="1" fill="#000"/><rect x="1" y="1" width="1" height="1" fill="#fff"/><rect x="3" y="1" width="1" height="1" fill="#fff"/><rect x="5" y="1" width="1" height="1" fill="#fff"/><rect x="7" y="1" width="1" height="1" fill="#fff"/><rect x="9" y="1" width="1" height="1" fill="#fff"/><rect x="11" y="1" width="1" height="1" fill="#fff"/><rect x="2" y="1" width="1" height="1" fill="#0ff"/><rect x="4" y="1" width="1" height="1" fill="#0ff"/><rect x="6" y="1" width="1" height="1" fill="#0ff"/><rect x="8" y="1" width="1" height="1" fill="#0ff"/><rect x="10" y="1" width="1" height="1" fill="#0ff"/><rect x="1" y="3" width="1" height="1" fill="#fff"/><rect x="1" y="5" width="1" height="1" fill="#fff"/><rect x="1" y="7" width="1" height="1" fill="#fff"/><rect x="1" y="9" width="1" height="1" fill="#fff"/><rect x="1" y="2" width="1" height="1" fill="#0ff"/><rect x="1" y="4" width="1" height="1" fill="#0ff"/><rect x="1" y="6" width="1" height="1" fill="#0ff"/><rect x="1" y="8" width="1" height="1" fill="#0ff"/><rect x="3" y="3" width="7" height="2" fill="#fff"/><rect x="3" y="6" width="9" height="1" fill="#003c4c"/><rect x="4" y="6" width="1" height="1" fill="#fff"/><rect x="6" y="6" width="1" height="1" fill="#fff"/><rect x="8" y="6" width="1" height="1" fill="#fff"/><rect x="10" y="6" width="1" height="1" fill="#fff"/><rect x="3" y="8" width="9" height="1" fill="#003c4c"/><rect x="4" y="8" width="1" height="1" fill="#fff"/><rect x="6" y="8" width="1" height="1" fill="#fff"/><rect x="8" y="8" width="1" height="1" fill="#fff"/><rect x="10" y="8" width="1" height="1" fill="#fff"/><rect x="0" y="0" width="1" height="1" fill="#f0f0f0"/><rect x="13" y="0" width="1" height="1" fill="#f0f0f0"/><rect x="0" y="11" width="1" height="1" fill="#f0f0f0"/></svg></div>
<div class="l" style="left:705.2px;top:311px;letter-spacing:0.000px;">0.00</div>
<div class="l" style="left:774px;top:262px;letter-spacing:0.111px;">Base Cálculo IPI:</div>
<div class="i" style="left:869px;top:260px;width:118px;height:22px;"></div>
<div class="b3" style="left:965px;top:261px;width:21px;height:19px"><svg width="14" height="12" viewBox="0 0 14 12" style="left:2px;top:2px" shape-rendering="crispEdges"><rect x="0" y="0" width="14" height="12" fill="#008080"/><rect x="12" y="1" width="1" height="10" fill="#000080"/><rect x="1" y="10" width="12" height="1" fill="#000080"/><rect x="13" y="1" width="1" height="11" fill="#000"/><rect x="1" y="11" width="13" height="1" fill="#000"/><rect x="1" y="1" width="1" height="1" fill="#fff"/><rect x="3" y="1" width="1" height="1" fill="#fff"/><rect x="5" y="1" width="1" height="1" fill="#fff"/><rect x="7" y="1" width="1" height="1" fill="#fff"/><rect x="9" y="1" width="1" height="1" fill="#fff"/><rect x="11" y="1" width="1" height="1" fill="#fff"/><rect x="2" y="1" width="1" height="1" fill="#0ff"/><rect x="4" y="1" width="1" height="1" fill="#0ff"/><rect x="6" y="1" width="1" height="1" fill="#0ff"/><rect x="8" y="1" width="1" height="1" fill="#0ff"/><rect x="10" y="1" width="1" height="1" fill="#0ff"/><rect x="1" y="3" width="1" height="1" fill="#fff"/><rect x="1" y="5" width="1" height="1" fill="#fff"/><rect x="1" y="7" width="1" height="1" fill="#fff"/><rect x="1" y="9" width="1" height="1" fill="#fff"/><rect x="1" y="2" width="1" height="1" fill="#0ff"/><rect x="1" y="4" width="1" height="1" fill="#0ff"/><rect x="1" y="6" width="1" height="1" fill="#0ff"/><rect x="1" y="8" width="1" height="1" fill="#0ff"/><rect x="3" y="3" width="7" height="2" fill="#fff"/><rect x="3" y="6" width="9" height="1" fill="#003c4c"/><rect x="4" y="6" width="1" height="1" fill="#fff"/><rect x="6" y="6" width="1" height="1" fill="#fff"/><rect x="8" y="6" width="1" height="1" fill="#fff"/><rect x="10" y="6" width="1" height="1" fill="#fff"/><rect x="3" y="8" width="9" height="1" fill="#003c4c"/><rect x="4" y="8" width="1" height="1" fill="#fff"/><rect x="6" y="8" width="1" height="1" fill="#fff"/><rect x="8" y="8" width="1" height="1" fill="#fff"/><rect x="10" y="8" width="1" height="1" fill="#fff"/><rect x="0" y="0" width="1" height="1" fill="#f0f0f0"/><rect x="13" y="0" width="1" height="1" fill="#f0f0f0"/><rect x="0" y="11" width="1" height="1" fill="#f0f0f0"/></svg></div>
<div class="l" style="left:934.2px;top:263px;letter-spacing:0.000px;">0.00</div>
<div class="l" style="left:774px;top:287px;letter-spacing:0.004px;">IPI Debitado:</div>
<div class="i" style="left:869px;top:285px;width:118px;height:22px;"></div>
<div class="b3" style="left:965px;top:286px;width:21px;height:19px"><svg width="14" height="12" viewBox="0 0 14 12" style="left:2px;top:2px" shape-rendering="crispEdges"><rect x="0" y="0" width="14" height="12" fill="#008080"/><rect x="12" y="1" width="1" height="10" fill="#000080"/><rect x="1" y="10" width="12" height="1" fill="#000080"/><rect x="13" y="1" width="1" height="11" fill="#000"/><rect x="1" y="11" width="13" height="1" fill="#000"/><rect x="1" y="1" width="1" height="1" fill="#fff"/><rect x="3" y="1" width="1" height="1" fill="#fff"/><rect x="5" y="1" width="1" height="1" fill="#fff"/><rect x="7" y="1" width="1" height="1" fill="#fff"/><rect x="9" y="1" width="1" height="1" fill="#fff"/><rect x="11" y="1" width="1" height="1" fill="#fff"/><rect x="2" y="1" width="1" height="1" fill="#0ff"/><rect x="4" y="1" width="1" height="1" fill="#0ff"/><rect x="6" y="1" width="1" height="1" fill="#0ff"/><rect x="8" y="1" width="1" height="1" fill="#0ff"/><rect x="10" y="1" width="1" height="1" fill="#0ff"/><rect x="1" y="3" width="1" height="1" fill="#fff"/><rect x="1" y="5" width="1" height="1" fill="#fff"/><rect x="1" y="7" width="1" height="1" fill="#fff"/><rect x="1" y="9" width="1" height="1" fill="#fff"/><rect x="1" y="2" width="1" height="1" fill="#0ff"/><rect x="1" y="4" width="1" height="1" fill="#0ff"/><rect x="1" y="6" width="1" height="1" fill="#0ff"/><rect x="1" y="8" width="1" height="1" fill="#0ff"/><rect x="3" y="3" width="7" height="2" fill="#fff"/><rect x="3" y="6" width="9" height="1" fill="#003c4c"/><rect x="4" y="6" width="1" height="1" fill="#fff"/><rect x="6" y="6" width="1" height="1" fill="#fff"/><rect x="8" y="6" width="1" height="1" fill="#fff"/><rect x="10" y="6" width="1" height="1" fill="#fff"/><rect x="3" y="8" width="9" height="1" fill="#003c4c"/><rect x="4" y="8" width="1" height="1" fill="#fff"/><rect x="6" y="8" width="1" height="1" fill="#fff"/><rect x="8" y="8" width="1" height="1" fill="#fff"/><rect x="10" y="8" width="1" height="1" fill="#fff"/><rect x="0" y="0" width="1" height="1" fill="#f0f0f0"/><rect x="13" y="0" width="1" height="1" fill="#f0f0f0"/><rect x="0" y="11" width="1" height="1" fill="#f0f0f0"/></svg></div>
<div class="l" style="left:934.2px;top:288px;letter-spacing:0.000px;">0.00</div>
<div class="l" style="left:774px;top:312px;letter-spacing:0.051px;">Isentas IPI:</div>
<div class="i" style="left:869px;top:310px;width:118px;height:22px;"></div>
<div class="b3" style="left:965px;top:311px;width:21px;height:19px"><svg width="14" height="12" viewBox="0 0 14 12" style="left:2px;top:2px" shape-rendering="crispEdges"><rect x="0" y="0" width="14" height="12" fill="#008080"/><rect x="12" y="1" width="1" height="10" fill="#000080"/><rect x="1" y="10" width="12" height="1" fill="#000080"/><rect x="13" y="1" width="1" height="11" fill="#000"/><rect x="1" y="11" width="13" height="1" fill="#000"/><rect x="1" y="1" width="1" height="1" fill="#fff"/><rect x="3" y="1" width="1" height="1" fill="#fff"/><rect x="5" y="1" width="1" height="1" fill="#fff"/><rect x="7" y="1" width="1" height="1" fill="#fff"/><rect x="9" y="1" width="1" height="1" fill="#fff"/><rect x="11" y="1" width="1" height="1" fill="#fff"/><rect x="2" y="1" width="1" height="1" fill="#0ff"/><rect x="4" y="1" width="1" height="1" fill="#0ff"/><rect x="6" y="1" width="1" height="1" fill="#0ff"/><rect x="8" y="1" width="1" height="1" fill="#0ff"/><rect x="10" y="1" width="1" height="1" fill="#0ff"/><rect x="1" y="3" width="1" height="1" fill="#fff"/><rect x="1" y="5" width="1" height="1" fill="#fff"/><rect x="1" y="7" width="1" height="1" fill="#fff"/><rect x="1" y="9" width="1" height="1" fill="#fff"/><rect x="1" y="2" width="1" height="1" fill="#0ff"/><rect x="1" y="4" width="1" height="1" fill="#0ff"/><rect x="1" y="6" width="1" height="1" fill="#0ff"/><rect x="1" y="8" width="1" height="1" fill="#0ff"/><rect x="3" y="3" width="7" height="2" fill="#fff"/><rect x="3" y="6" width="9" height="1" fill="#003c4c"/><rect x="4" y="6" width="1" height="1" fill="#fff"/><rect x="6" y="6" width="1" height="1" fill="#fff"/><rect x="8" y="6" width="1" height="1" fill="#fff"/><rect x="10" y="6" width="1" height="1" fill="#fff"/><rect x="3" y="8" width="9" height="1" fill="#003c4c"/><rect x="4" y="8" width="1" height="1" fill="#fff"/><rect x="6" y="8" width="1" height="1" fill="#fff"/><rect x="8" y="8" width="1" height="1" fill="#fff"/><rect x="10" y="8" width="1" height="1" fill="#fff"/><rect x="0" y="0" width="1" height="1" fill="#f0f0f0"/><rect x="13" y="0" width="1" height="1" fill="#f0f0f0"/><rect x="0" y="11" width="1" height="1" fill="#f0f0f0"/></svg></div>
<div class="l" style="left:934.2px;top:313px;letter-spacing:0.000px;">0.00</div>
<div class="l" style="left:774px;top:338px;letter-spacing:-0.028px;">Outras IPI:</div>
<div class="i" style="left:869px;top:335px;width:118px;height:22px;"></div>
<div class="b3" style="left:965px;top:336px;width:21px;height:19px"><svg width="14" height="12" viewBox="0 0 14 12" style="left:2px;top:2px" shape-rendering="crispEdges"><rect x="0" y="0" width="14" height="12" fill="#008080"/><rect x="12" y="1" width="1" height="10" fill="#000080"/><rect x="1" y="10" width="12" height="1" fill="#000080"/><rect x="13" y="1" width="1" height="11" fill="#000"/><rect x="1" y="11" width="13" height="1" fill="#000"/><rect x="1" y="1" width="1" height="1" fill="#fff"/><rect x="3" y="1" width="1" height="1" fill="#fff"/><rect x="5" y="1" width="1" height="1" fill="#fff"/><rect x="7" y="1" width="1" height="1" fill="#fff"/><rect x="9" y="1" width="1" height="1" fill="#fff"/><rect x="11" y="1" width="1" height="1" fill="#fff"/><rect x="2" y="1" width="1" height="1" fill="#0ff"/><rect x="4" y="1" width="1" height="1" fill="#0ff"/><rect x="6" y="1" width="1" height="1" fill="#0ff"/><rect x="8" y="1" width="1" height="1" fill="#0ff"/><rect x="10" y="1" width="1" height="1" fill="#0ff"/><rect x="1" y="3" width="1" height="1" fill="#fff"/><rect x="1" y="5" width="1" height="1" fill="#fff"/><rect x="1" y="7" width="1" height="1" fill="#fff"/><rect x="1" y="9" width="1" height="1" fill="#fff"/><rect x="1" y="2" width="1" height="1" fill="#0ff"/><rect x="1" y="4" width="1" height="1" fill="#0ff"/><rect x="1" y="6" width="1" height="1" fill="#0ff"/><rect x="1" y="8" width="1" height="1" fill="#0ff"/><rect x="3" y="3" width="7" height="2" fill="#fff"/><rect x="3" y="6" width="9" height="1" fill="#003c4c"/><rect x="4" y="6" width="1" height="1" fill="#fff"/><rect x="6" y="6" width="1" height="1" fill="#fff"/><rect x="8" y="6" width="1" height="1" fill="#fff"/><rect x="10" y="6" width="1" height="1" fill="#fff"/><rect x="3" y="8" width="9" height="1" fill="#003c4c"/><rect x="4" y="8" width="1" height="1" fill="#fff"/><rect x="6" y="8" width="1" height="1" fill="#fff"/><rect x="8" y="8" width="1" height="1" fill="#fff"/><rect x="10" y="8" width="1" height="1" fill="#fff"/><rect x="0" y="0" width="1" height="1" fill="#f0f0f0"/><rect x="13" y="0" width="1" height="1" fill="#f0f0f0"/><rect x="0" y="11" width="1" height="1" fill="#f0f0f0"/></svg></div>
<div class="l" style="left:934.2px;top:338px;letter-spacing:0.000px;">0.00</div>
<div class="l" style="left:774px;top:362px;letter-spacing:-0.064px;">IPI Cred. 50%:</div>
<div class="i" style="left:869px;top:359px;width:118px;height:22px;"></div>
<div class="b3" style="left:965px;top:360px;width:21px;height:19px"><svg width="14" height="12" viewBox="0 0 14 12" style="left:2px;top:2px" shape-rendering="crispEdges"><rect x="0" y="0" width="14" height="12" fill="#008080"/><rect x="12" y="1" width="1" height="10" fill="#000080"/><rect x="1" y="10" width="12" height="1" fill="#000080"/><rect x="13" y="1" width="1" height="11" fill="#000"/><rect x="1" y="11" width="13" height="1" fill="#000"/><rect x="1" y="1" width="1" height="1" fill="#fff"/><rect x="3" y="1" width="1" height="1" fill="#fff"/><rect x="5" y="1" width="1" height="1" fill="#fff"/><rect x="7" y="1" width="1" height="1" fill="#fff"/><rect x="9" y="1" width="1" height="1" fill="#fff"/><rect x="11" y="1" width="1" height="1" fill="#fff"/><rect x="2" y="1" width="1" height="1" fill="#0ff"/><rect x="4" y="1" width="1" height="1" fill="#0ff"/><rect x="6" y="1" width="1" height="1" fill="#0ff"/><rect x="8" y="1" width="1" height="1" fill="#0ff"/><rect x="10" y="1" width="1" height="1" fill="#0ff"/><rect x="1" y="3" width="1" height="1" fill="#fff"/><rect x="1" y="5" width="1" height="1" fill="#fff"/><rect x="1" y="7" width="1" height="1" fill="#fff"/><rect x="1" y="9" width="1" height="1" fill="#fff"/><rect x="1" y="2" width="1" height="1" fill="#0ff"/><rect x="1" y="4" width="1" height="1" fill="#0ff"/><rect x="1" y="6" width="1" height="1" fill="#0ff"/><rect x="1" y="8" width="1" height="1" fill="#0ff"/><rect x="3" y="3" width="7" height="2" fill="#fff"/><rect x="3" y="6" width="9" height="1" fill="#003c4c"/><rect x="4" y="6" width="1" height="1" fill="#fff"/><rect x="6" y="6" width="1" height="1" fill="#fff"/><rect x="8" y="6" width="1" height="1" fill="#fff"/><rect x="10" y="6" width="1" height="1" fill="#fff"/><rect x="3" y="8" width="9" height="1" fill="#003c4c"/><rect x="4" y="8" width="1" height="1" fill="#fff"/><rect x="6" y="8" width="1" height="1" fill="#fff"/><rect x="8" y="8" width="1" height="1" fill="#fff"/><rect x="10" y="8" width="1" height="1" fill="#fff"/><rect x="0" y="0" width="1" height="1" fill="#f0f0f0"/><rect x="13" y="0" width="1" height="1" fill="#f0f0f0"/><rect x="0" y="11" width="1" height="1" fill="#f0f0f0"/></svg></div>
<div class="l" style="left:934.2px;top:362px;letter-spacing:0.000px;">0.00</div>
<div class="l" style="left:24.4px;top:419px;letter-spacing:0.200px;">Base Cálculo</div>
<div class="d" style="left:167px;top:412px;width:121px;height:22px"></div>
<div class="l" style="left:237.4px;top:416px;letter-spacing:0.112px;color:#6e6e6e;">R$ 0.00</div>
<div class="l" style="left:24.4px;top:445px;letter-spacing:-0.109px;">Valor Total IBS</div>
<div class="d" style="left:167px;top:437px;width:121px;height:22px"></div>
<div class="l" style="left:237.4px;top:441px;letter-spacing:0.112px;color:#6e6e6e;">R$ 0.00</div>
<div class="l" style="left:24.4px;top:471px;letter-spacing:-0.032px;">Valor Total CBS</div>
<div class="d" style="left:167px;top:462px;width:121px;height:22px"></div>
<div class="l" style="left:237.4px;top:466px;letter-spacing:0.112px;color:#6e6e6e;">R$ 0.00</div>
<div class="l" style="left:298px;top:422px;letter-spacing:-0.189px;">Vlr.Tot IBS UF.</div>
<div class="d" style="left:420px;top:412px;width:121px;height:22px"></div>
<div class="l" style="left:490.4px;top:416px;letter-spacing:0.112px;color:#6e6e6e;">R$ 0.00</div>
<div class="l" style="left:298px;top:442px;letter-spacing:-0.122px;">Vlr.Tot Dif</div>
<div class="d" style="left:420px;top:437px;width:121px;height:22px"></div>
<div class="l" style="left:490.4px;top:441px;letter-spacing:0.112px;color:#6e6e6e;">R$ 0.00</div>
<div class="l" style="left:298px;top:468px;letter-spacing:-0.183px;">Vlr.Tot Dev</div>
<div class="d" style="left:420px;top:462px;width:121px;height:22px"></div>
<div class="l" style="left:490.4px;top:466px;letter-spacing:0.112px;color:#6e6e6e;">R$ 0.00</div>
<div class="l" style="left:546.8px;top:418px;letter-spacing:-0.181px;">Vlr.Tot IBS Mun.</div>
<div class="d" style="left:638px;top:412px;width:121px;height:22px"></div>
<div class="l" style="left:708.4px;top:415px;letter-spacing:0.112px;color:#6e6e6e;">R$ 0.00</div>
<div class="l" style="left:546.8px;top:444px;letter-spacing:-0.077px;">Vlr.Tot Dif</div>
<div class="d" style="left:638px;top:437px;width:121px;height:22px"></div>
<div class="l" style="left:708.4px;top:440px;letter-spacing:0.112px;color:#6e6e6e;">R$ 0.00</div>
<div class="l" style="left:546.8px;top:470px;letter-spacing:-0.165px;">Vlr.Tot Dev</div>
<div class="d" style="left:638px;top:462px;width:121px;height:22px"></div>
<div class="l" style="left:708.4px;top:465px;letter-spacing:0.112px;color:#6e6e6e;">R$ 0.00</div>
<div class="l" style="left:21px;top:528px;letter-spacing:-0.036px;">Vlr.Cred.Pres.IBS</div>
<div class="d" style="left:168px;top:524px;width:121px;height:22px"></div>
<div class="l" style="left:238.4px;top:528px;letter-spacing:0.112px;color:#6e6e6e;">R$ 0.00</div>
<div class="l" style="left:21px;top:557px;letter-spacing:0.008px;">Vlr.Cred.Pres.CBS</div>
<div class="d" style="left:168px;top:551px;width:121px;height:22px"></div>
<div class="l" style="left:238.4px;top:555px;letter-spacing:0.112px;color:#6e6e6e;">R$ 0.00</div>
<div class="l" style="left:295.2px;top:530px;letter-spacing:-0.249px;">Vlr.Tot. IBS Mon.</div>
<div class="d" style="left:420px;top:524px;width:121px;height:22px"></div>
<div class="l" style="left:490.4px;top:528px;letter-spacing:0.112px;color:#6e6e6e;">R$ 0.00</div>
<div class="l" style="left:295.2px;top:557px;letter-spacing:-0.176px;">Vlr.Tot. IBS Mon.ret</div>
<div class="d" style="left:420px;top:549px;width:121px;height:22px"></div>
<div class="l" style="left:490.4px;top:553px;letter-spacing:0.112px;color:#6e6e6e;">R$ 0.00</div>
<div class="l" style="left:295.2px;top:583px;letter-spacing:-0.139px;">Vlr.Tot.IBS.Mon.ret ant</div>
<div class="d" style="left:420px;top:574px;width:121px;height:22px"></div>
<div class="l" style="left:490.4px;top:578px;letter-spacing:0.112px;color:#6e6e6e;">R$ 0.00</div>
<div class="l" style="left:295.2px;top:609px;letter-spacing:-0.204px;">Vlr.Tot. CBS Mon.</div>
<div class="d" style="left:420px;top:599px;width:121px;height:22px"></div>
<div class="l" style="left:490.4px;top:603px;letter-spacing:0.112px;color:#6e6e6e;">R$ 0.00</div>
<div class="l" style="left:295.2px;top:633px;letter-spacing:-0.144px;">Vlr.Tot. CBS Mon.ret</div>
<div class="d" style="left:420px;top:624px;width:121px;height:22px"></div>
<div class="l" style="left:490.4px;top:628px;letter-spacing:0.112px;color:#6e6e6e;">R$ 0.00</div>
<div class="l" style="left:294px;top:658px;letter-spacing:-0.099px;">Vlr.Tot. CBS.Mon.ret ant</div>
<div class="d" style="left:420px;top:649px;width:121px;height:22px"></div>
<div class="l" style="left:490.4px;top:653px;letter-spacing:0.112px;color:#6e6e6e;">R$ 0.00</div>
<div class="l" style="left:548.7px;top:528px;letter-spacing:-0.139px;">Vlr.Tot Dif.</div>
<div class="d" style="left:639px;top:522px;width:121px;height:22px"></div>
<div class="l" style="left:709.4px;top:526px;letter-spacing:0.112px;color:#6e6e6e;">R$ 0.00</div>
<div class="l" style="left:548.7px;top:554px;letter-spacing:-0.156px;">Vlr.Tot Dev</div>
<div class="d" style="left:639px;top:548px;width:121px;height:22px"></div>
<div class="l" style="left:709.4px;top:551px;letter-spacing:0.112px;color:#6e6e6e;">R$ 0.00</div>
<div class="l" style="left:768.8px;top:531px;letter-spacing:-0.123px;">Valor IS</div>
<div class="d" style="left:866px;top:524px;width:121px;height:22px"></div>
<div class="l" style="left:936.4px;top:527px;letter-spacing:0.112px;color:#6e6e6e;">R$ 0.00</div>
<div class="btn" style="left:7.2px;top:683px;width:22.5px;height:22.5px"><svg style="left:2.5px;top:6px" width="14" height="9" viewBox="0 0 14 9"><path d="M0 4.5L5 0V2.5L8 0V2.5H14V6.5H8V9L5 6.5V9Z" fill="#3f8080" stroke="#4a4a4a" stroke-width="0.9" stroke-linejoin="miter"/></svg></div>
<div class="btn" style="left:32.2px;top:683px;width:22.5px;height:22.5px"><svg style="left:5.0px;top:6px" width="11" height="9" viewBox="0 0 11 9"><path d="M0 4.5L5 0V2.5H11V6.5H5V9Z" fill="#3f8080" stroke="#4a4a4a" stroke-width="0.9" stroke-linejoin="miter"/></svg></div>
<div class="btn" style="left:57.2px;top:683px;width:22.5px;height:22.5px"><svg style="left:5.0px;top:6px" width="11" height="9" viewBox="0 0 11 9"><path d="M11 4.5L6 0V2.5H0V6.5H6V9Z" fill="#3f8080" stroke="#4a4a4a" stroke-width="0.9" stroke-linejoin="miter"/></svg></div>
<div class="btn" style="left:82.2px;top:683px;width:22.5px;height:22.5px"><svg style="left:3.5px;top:6px" width="14" height="9" viewBox="0 0 14 9"><path d="M14 4.5L9 0V2.5L6 0V2.5H0V6.5H6V9L9 6.5V9Z" fill="#3f8080" stroke="#4a4a4a" stroke-width="0.9" stroke-linejoin="miter"/></svg></div>
<div class="l" style="left:112.3px;top:684px;letter-spacing:-0.203px;">Nº NF:</div>
<div class="a" style="left:151px;top:683px;width:86px;height:21px;background:#fff"></div>
<div class="btn" style="left:243px;top:682.5px;width:22.5px;height:22px"><svg style="left:3px;top:3px" width="16" height="16" viewBox="0 0 16 16"><path d="M7 10.5L1.8 15.2" stroke="#555" stroke-width="2.4" stroke-linecap="round"/><circle cx="10.2" cy="6.5" r="4.4" fill="#cfcfcf" stroke="#5a5a5a" stroke-width="1.3"/><circle cx="9.3" cy="5.4" r="2" fill="#ececec"/></svg></div>
<div class="btn" style="left:528.5px;top:683px;width:72.5px;height:23px;"><svg style="left:12px;top:7px" width="17" height="10" viewBox="0 0 17 10"><path d="M0.5 3H2.5V1L5.8 4.5L2.5 8V6H0.5Z" fill="#2f8c8c" stroke="#454545" stroke-width="0.8"/><g shape-rendering="crispEdges"><rect x="7" y="0" width="9" height="9" fill="#4a4a4a"/><rect x="8" y="3" width="7" height="5" fill="#fff"/><rect x="7" y="0" width="9" height="3" fill="#2b8080"/><rect x="8" y="1" width="1" height="1" fill="#fff"/><rect x="11" y="1" width="1" height="1" fill="#fff"/><rect x="14" y="1" width="1" height="1" fill="#fff"/><rect x="9" y="4" width="2" height="1" fill="#444"/><rect x="12" y="4" width="2" height="1" fill="#444"/><rect x="9" y="6" width="2" height="1" fill="#444"/><rect x="12" y="6" width="2" height="1" fill="#444"/></g></svg></div>
<div class="l" style="left:561px;top:688.2px;letter-spacing:-0.382px;-webkit-text-stroke:0;font-size:11.5px;line-height:13.5px;height:13.5px;"><u>I</u>ncluir</div>
<div class="btn" style="left:609.5px;top:683.5px;width:86.0px;height:22.0px;background:#f6f6f5;border-color:#eeece3"></div>
<div class="l" style="left:639px;top:688.2px;letter-spacing:-0.397px;color:#a3a3a3;-webkit-text-stroke:0;font-size:11.5px;line-height:13.5px;height:13.5px;">C<u>o</u>nfirmar</div>
<div class="btn" style="left:702.5px;top:683.5px;width:82.0px;height:22.0px;background:#f6f6f5;border-color:#eeece3"></div>
<div class="l" style="left:732px;top:688.2px;letter-spacing:-0.427px;color:#a3a3a3;-webkit-text-stroke:0;font-size:11.5px;line-height:13.5px;height:13.5px;">Ca<u>n</u>celar</div>
<div class="btn" style="left:793px;top:683px;width:76px;height:23px;border:1px solid #0f7ad6;box-shadow:0 0 0 0.4px #5aa5e6"><svg style="left:0;top:0" width="74" height="21"><rect x="1.5" y="1.5" width="71" height="18" rx="1.5" fill="none" stroke="#000" stroke-width="1" stroke-dasharray="1 1"/></svg><svg style="left:9px;top:1px" width="20" height="19" viewBox="0 0 20 19"><path d="M8.5 2.5H14.8L17.5 5.2V16.5H8.5Z" fill="#fff" stroke="#555" stroke-width="1"/><path d="M14.8 2.5V5.2H17.5" fill="none" stroke="#555" stroke-width="0.9"/><path d="M11.2 5.5H12.8M14.4 8.5H16" stroke="#666" stroke-width="1"/><path d="M9 16.3L10 14.6L11 16.3L12.2 14.6L13.4 16.3L14.6 14.6L15.8 16.3Z" fill="#555" stroke="#555" stroke-width="0.6"/><path d="M3.5 8.8H5V7.6H9L10.5 9.4H13V10.8H10.8V11.4H11.6V12.7H10.8V13.3H11V14.6H9.5L9 15.7H5.5L4.5 15H3.5Z" fill="#c4c4c4" stroke="#555" stroke-width="0.9"/><path d="M7.2 10.4H12.6M7.2 12.2H11.2M7.2 14H10.6" stroke="#555" stroke-width="0.9"/><rect x="2" y="8.2" width="1.6" height="7.6" fill="#555"/><path d="M4.9 3L15.5 13.7" stroke="#555" stroke-width="1"/><path d="M4.6 2.4L15.2 13.1" stroke="#56b9b9" stroke-width="1.5" stroke-dasharray="1.3 0.8"/></svg></div>
<div class="l" style="left:825.4px;top:688.8px;letter-spacing:-0.223px;-webkit-text-stroke:0;font-size:11.5px;line-height:13.5px;height:13.5px;"><u>A</u>lterar</div>
<div class="btn" style="left:875px;top:683px;width:74px;height:23px;"><svg style="left:11px;top:3px" width="16" height="16" viewBox="0 0 16 16"><g shape-rendering="crispEdges"><rect x="0" y="0" width="12" height="9" fill="#4a4a4a"/><rect x="1" y="3" width="10" height="5" fill="#fff"/><rect x="0" y="0" width="12" height="3" fill="#2b8080"/><rect x="1" y="1" width="1" height="1" fill="#fff"/><rect x="4" y="1" width="1" height="1" fill="#fff"/><rect x="7" y="1" width="1" height="1" fill="#fff"/><rect x="10" y="1" width="1" height="1" fill="#fff"/><rect x="2" y="4" width="2" height="1" fill="#444"/><rect x="5" y="4" width="2" height="1" fill="#444"/><rect x="8" y="4" width="2" height="1" fill="#444"/><rect x="2" y="6" width="2" height="1" fill="#444"/><rect x="5" y="6" width="2" height="1" fill="#444"/></g><path d="M6.3 5.3L13.8 13M13.6 6.3L7.3 14" stroke="#c4000c" stroke-width="1.7" stroke-linecap="round"/></svg></div>
<div class="l" style="left:906.4px;top:688.8px;letter-spacing:-0.459px;-webkit-text-stroke:0;font-size:11.5px;line-height:13.5px;height:13.5px;">E<u>x</u>cluir</div>
<div class="btn" style="left:956px;top:683px;width:83.5px;height:23px;"><svg style="left:7px;top:5px" width="18" height="14" viewBox="0 0 18 14"><path d="M1 6L7.1 0.3L17 5.7L9.5 12.4Z" fill="#fff" stroke="#444" stroke-width="0.9" stroke-linejoin="round"/><path d="M9.9 1.9L5.1 7.5M13.5 3.9L8.7 9.9" stroke="#666" stroke-width="0.7"/><path d="M1 6.4L9.5 12.9L17 6.1" fill="none" stroke="#1a1a9a" stroke-width="1.3"/></svg></div>
<div class="l" style="left:985px;top:688.8px;letter-spacing:-0.433px;-webkit-text-stroke:0;font-size:11.5px;line-height:13.5px;height:13.5px;"><u>E</u>xibir Log</div>
<div class="btn" style="left:956px;top:710px;width:83.5px;height:23px;"><svg style="left:14px;top:3px" width="18" height="17" viewBox="0 0 18 17"><path d="M0.5 4.5H3V2.5L6.3 6L3 9.5V7.5H0.5Z" fill="#3a9494" stroke="#3a8a8a" stroke-width="0.5"/><path d="M8 11V1H14.5V11M3.5 11H16" fill="none" stroke="#4a4a4a" stroke-width="1.1"/><path d="M10.8 3.2L14.5 1.4V11.5L10.8 15.2Z" fill="#3a9494" stroke="#4a4a4a" stroke-width="0.9"/></svg></div>
<div class="l" style="left:991.5px;top:715.8px;letter-spacing:-0.414px;-webkit-text-stroke:0;font-size:11.5px;line-height:13.5px;height:13.5px;"><u>F</u>echar</div>
<div class="l" style="left:5.9px;top:715px;letter-spacing:0.112px;">Analise atual:</div>
<div class="a" style="left:86px;top:711px;width:863px;height:21px;background:#fff;border:1px solid #7a7a7a;border-radius:2px"><svg style="left:849px;top:7px" width="10" height="6" viewBox="0 0 10 6"><path d="M0.5 0.5L5 5L9.5 0.5" stroke="#444" fill="none"/></svg></div>
<div class="a" style="left:0;top:740px;width:1050px;height:15px;background:#f0f0f0;border-top:1px solid #dadada"></div>
<svg style="left:1042px;top:748px" width="8" height="7" viewBox="0 0 8 7" shape-rendering="crispEdges"><g fill="#b4b4b4"><rect x="4" y="1" width="2" height="2"/><rect x="4" y="4" width="2" height="2"/><rect x="1" y="4" width="2" height="2"/></g><path d="M8 5.5V7H6.5Z" fill="#777"/></svg>
</body></html>
